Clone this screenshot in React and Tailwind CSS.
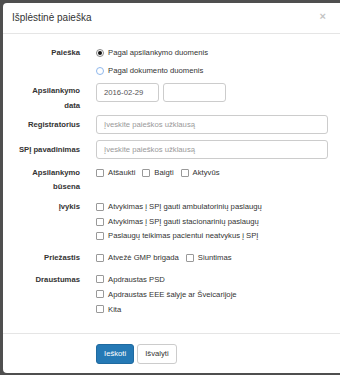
import React from "react";

const Box = () => (
  <span className="inline-block w-[8px] h-[8px] border border-[#999] rounded-[1px] bg-white shrink-0" />
);

const Check = ({ children }) => (
  <span className="inline-flex items-center gap-[4px]">
    <Box />
    <span>{children}</span>
  </span>
);

export default function App() {
  return (
    <div
      className="w-[340px] h-[375px] bg-[#4f4f4f] pt-[3px] pl-[3px] overflow-hidden text-[#333] text-[7.7px]"
      style={{ fontFamily: '"Liberation Sans", Arial, sans-serif' }}
    >
      <div className="w-[345px] h-[370px] bg-white rounded-[4px] flex flex-col">
        {/* header */}
        <div className="h-[31px] flex items-center justify-between pl-[9px] pr-[22px] border-b border-[#e5e5e5]">
          <span className="text-[10px] leading-none">Išplėstinė paieška</span>
          <span className="text-[11px] font-bold text-[#c4c4c4] leading-none -mt-[3px]">×</span>
        </div>

        {/* body */}
        <div className="pt-[10px] pb-[16px] flex flex-col">
          {/* Paieška */}
          <div className="flex">
            <div className="w-[77px] text-right font-bold leading-[18px]">Paieška</div>
            <div className="ml-[16px] flex flex-col leading-[18px]">
              <span className="inline-flex items-center gap-[4px]">
                <span className="w-[8px] h-[8px] rounded-full border border-[#888] flex items-center justify-center">
                  <span className="w-[4px] h-[4px] rounded-full bg-[#111]" />
                </span>
                <span>Pagal apsilankymo duomenis</span>
              </span>
              <span className="inline-flex items-center gap-[4px]">
                <span className="w-[8px] h-[8px] rounded-full border border-[#8fb8ec]" />
                <span>Pagal dokumento duomenis</span>
              </span>
            </div>
          </div>

          {/* Apsilankymo data */}
          <div className="flex mt-[3px]">
            <div className="w-[77px] text-right font-bold leading-[15px]">
              Apsilankymo
              <br />
              data
            </div>
            <div className="ml-[16px] flex gap-[4px]">
              <div className="w-[63px] h-[19px] border border-[#ccc] rounded-[3px] pl-[7px] flex items-center text-[#555]">
                2016-02-29
              </div>
              <div className="w-[63px] h-[19px] border border-[#ccc] rounded-[3px]" />
            </div>
          </div>

          {/* Registratorius */}
          <div className="flex items-center mt-[2px]">
            <div className="w-[77px] text-right font-bold">Registratorius</div>
            <div className="ml-[16px] w-[232px] h-[19px] border border-[#ccc] rounded-[3px] pl-[7px] flex items-center text-[#999]">
              Įveskite paieškos užklausą
            </div>
          </div>

          {/* SPĮ pavadinimas */}
          <div className="flex items-center mt-[6px]">
            <div className="w-[77px] text-right font-bold">SPĮ pavadinimas</div>
            <div className="ml-[16px] w-[232px] h-[19px] border border-[#ccc] rounded-[3px] pl-[7px] flex items-center text-[#999]">
              Įveskite paieškos užklausą
            </div>
          </div>

          {/* Apsilankymo būsena */}
          <div className="flex mt-[7px]">
            <div className="w-[77px] text-right font-bold leading-[14px]">
              Apsilankymo
              <br />
              būsena
            </div>
            <div className="ml-[16px] flex gap-[7px] leading-[14px] h-[14px]">
              <Check>Atšaukti</Check>
              <Check>Baigti</Check>
              <Check>Aktyvūs</Check>
            </div>
          </div>

          {/* Įvykis */}
          <div className="flex mt-[6px]">
            <div className="w-[77px] text-right font-bold leading-[14.5px]">Įvykis</div>
            <div className="ml-[16px] flex flex-col leading-[14.5px]">
              <Check>Atvykimas į SPĮ gauti ambulatorinių paslaugų</Check>
              <Check>Atvykimas į SPĮ gauti stacionarinių paslaugų</Check>
              <Check>Paslaugų teikimas pacientui neatvykus į SPĮ</Check>
            </div>
          </div>

          {/* Priežastis */}
          <div className="flex mt-[7.5px]">
            <div className="w-[77px] text-right font-bold leading-[14px]">Priežastis</div>
            <div className="ml-[16px] flex gap-[7px] leading-[14px]">
              <Check>Atvežė GMP brigada</Check>
              <Check>Siuntimas</Check>
            </div>
          </div>

          {/* Draustumas */}
          <div className="flex mt-[6.5px]">
            <div className="w-[77px] text-right font-bold leading-[15px]">Draustumas</div>
            <div className="ml-[16px] flex flex-col leading-[15px]">
              <Check>Apdraustas PSD</Check>
              <Check>Apdraustas EEE šalyje ar Šveicarijoje</Check>
              <Check>Kita</Check>
            </div>
          </div>
        </div>

        {/* footer */}
        <div className="border-t border-[#e5e5e5] pt-[10px] pl-[93px] flex gap-[3px]">
          <button className="h-[20px] px-[7px] rounded-[3px] bg-[#2579b5] border border-[#1f6aa0] text-white text-[7.7px]">
            Ieškoti
          </button>
          <button className="h-[20px] px-[7px] rounded-[3px] bg-white border border-[#ccc] text-[#333] text-[7.7px]">
            Išvalyti
          </button>
        </div>
      </div>
    </div>
  );
}
